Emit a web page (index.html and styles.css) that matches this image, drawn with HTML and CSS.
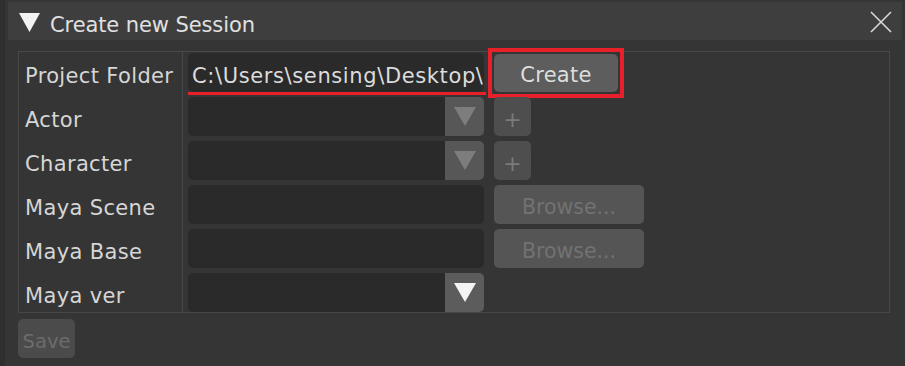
FILE: index.html
```html
<!DOCTYPE html>
<html>
<head>
<meta charset="utf-8">
<link rel="stylesheet" href="styles.css">
</head>
<body>
<div class="window">
  <div class="titlebar">
    <svg class="tri" width="21" height="19" viewBox="0 0 21 19"><polygon points="0,0 21,0 10.5,19" fill="#f2f2f2"/></svg>
    <span class="title">Create new Session</span>
    <svg class="close" width="22" height="22" viewBox="0 0 22 22"><path d="M1 1 L21 21 M21 1 L1 21" stroke="#d8d8d8" stroke-width="1.6" fill="none"/></svg>
  </div>
  <div class="content">
    <div class="table">
      <div class="labels">
        <div class="label">Project Folder</div>
        <div class="label">Actor</div>
        <div class="label">Character</div>
        <div class="label">Maya Scene</div>
        <div class="label">Maya Base</div>
        <div class="label">Maya ver</div>
      </div>
      <div class="fields">
        <div class="row">
          <div class="input marked"><span class="path">C:\Users\sensing\Desktop\</span></div>
          <div class="highlight"><button class="btn create">Create</button></div>
        </div>
        <div class="row">
          <div class="combo disabled"><div class="combo-field"></div><div class="arrow"><svg width="22" height="19" viewBox="0 0 22 19"><polygon points="0,0 22,0 11,19" fill="#7d7d7d"/></svg></div></div>
          <button class="btn plus">+</button>
        </div>
        <div class="row">
          <div class="combo disabled"><div class="combo-field"></div><div class="arrow"><svg width="22" height="19" viewBox="0 0 22 19"><polygon points="0,0 22,0 11,19" fill="#7d7d7d"/></svg></div></div>
          <button class="btn plus">+</button>
        </div>
        <div class="row">
          <div class="input"></div>
          <button class="btn browse">Browse...</button>
        </div>
        <div class="row">
          <div class="input"></div>
          <button class="btn browse">Browse...</button>
        </div>
        <div class="row">
          <div class="combo"><div class="combo-field"></div><div class="arrow"><svg width="22" height="19" viewBox="0 0 22 19"><polygon points="0,0 22,0 11,19" fill="#f4f4f4"/></svg></div></div>
        </div>
      </div>
    </div>
    <button class="btn save">Save</button>
  </div>
</div>
</body>
</html>
```

FILE: styles.css
```css
html, body {
  margin: 0;
  padding: 0;
  background: #2f2f2f;
  width: 905px;
  height: 366px;
  overflow: hidden;
  font-family: "DejaVu Sans", sans-serif;
  font-size: 21px;
  color: #d6d6d6;
}
.window {
  margin-left: 5px;
  height: 366px;
  background: #353535;
  padding-top: 2px;
  box-sizing: border-box;
}
.titlebar {
  margin-left: 3px;
  width: 894px;
  height: 38px;
  background: #3e3e3e;
  display: flex;
  align-items: center;
}
.tri {
  margin-left: 11px;
  margin-top: 2px;
}
.title {
  margin-left: 10px;
  color: #e0e0e0;
  font-size: 21px;
  letter-spacing: -0.1px;
  margin-top: 8px;
}
.close {
  margin-left: auto;
  margin-right: 10px;
  margin-top: 2px;
}
.content {
  padding-left: 13px;
  padding-top: 11px;
}
.table {
  width: 872px;
  box-sizing: border-box;
  border: 1px solid #484848;
  display: flex;
}
.labels {
  width: 163px;
  border-right: 1px solid #484848;
  padding-top: 1px;
  display: flex;
  flex-direction: column;
  gap: 5px;
}
.label {
  height: 39px;
  display: flex;
  align-items: center;
  padding-left: 6px;
  padding-top: 6px;
  box-sizing: border-box;
  letter-spacing: 0.35px;
}
.fields {
  padding-left: 5px;
  padding-top: 1px;
  display: flex;
  flex-direction: column;
  gap: 5px;
}
.row {
  height: 39px;
  display: flex;
  align-items: center;
  gap: 10px;
}
.input {
  width: 296px;
  height: 39px;
  background: #2a2a2a;
  border-radius: 5px;
  box-sizing: border-box;
  display: flex;
  align-items: center;
  overflow: hidden;
  position: relative;
}
.path {
  padding-left: 4px;
  padding-top: 6px;
  white-space: nowrap;
  color: #dcdcdc;
  letter-spacing: 0.62px;
}
.marked {
  overflow: visible;
}
.marked::after {
  content: "";
  position: absolute;
  left: 0;
  width: 298px;
  top: 39px;
  height: 3px;
  background: #e8202a;
}
.combo {
  width: 296px;
  height: 39px;
  display: flex;
  border-radius: 5px;
  overflow: hidden;
}
.combo-field {
  flex: 1;
  background: #2a2a2a;
}
.arrow {
  width: 39px;
  background: #5c5c5c;
  display: flex;
  align-items: center;
  justify-content: center;
}
.combo.disabled .arrow {
  background: #575757;
}
.btn {
  font-family: "DejaVu Sans", sans-serif;
  font-size: 20.5px;
  border: none;
  border-radius: 5px;
  background: #5d5d5d;
  color: #dedede;
  padding: 0;
  padding-top: 5px;
  box-sizing: border-box;
}
.highlight {
  margin-left: -6px;
  border: 4px solid #e8202a;
  padding: 2px;
  display: flex;
}
.create {
  width: 124px;
  height: 38px;
  font-size: 21px;
  letter-spacing: 0.3px;
}
.plus {
  width: 37px;
  height: 39px;
  background: #4e4e4e;
  color: #7a7a7a;
  font-size: 22px;
}
.browse {
  width: 150px;
  height: 39px;
  background: #555555;
  color: #727272;
}
.save {
  margin-top: 6px;
  width: 57px;
  height: 39px;
  background: #4b4b4b;
  color: #6c6c6c;
  font-size: 19.5px;
}
```
